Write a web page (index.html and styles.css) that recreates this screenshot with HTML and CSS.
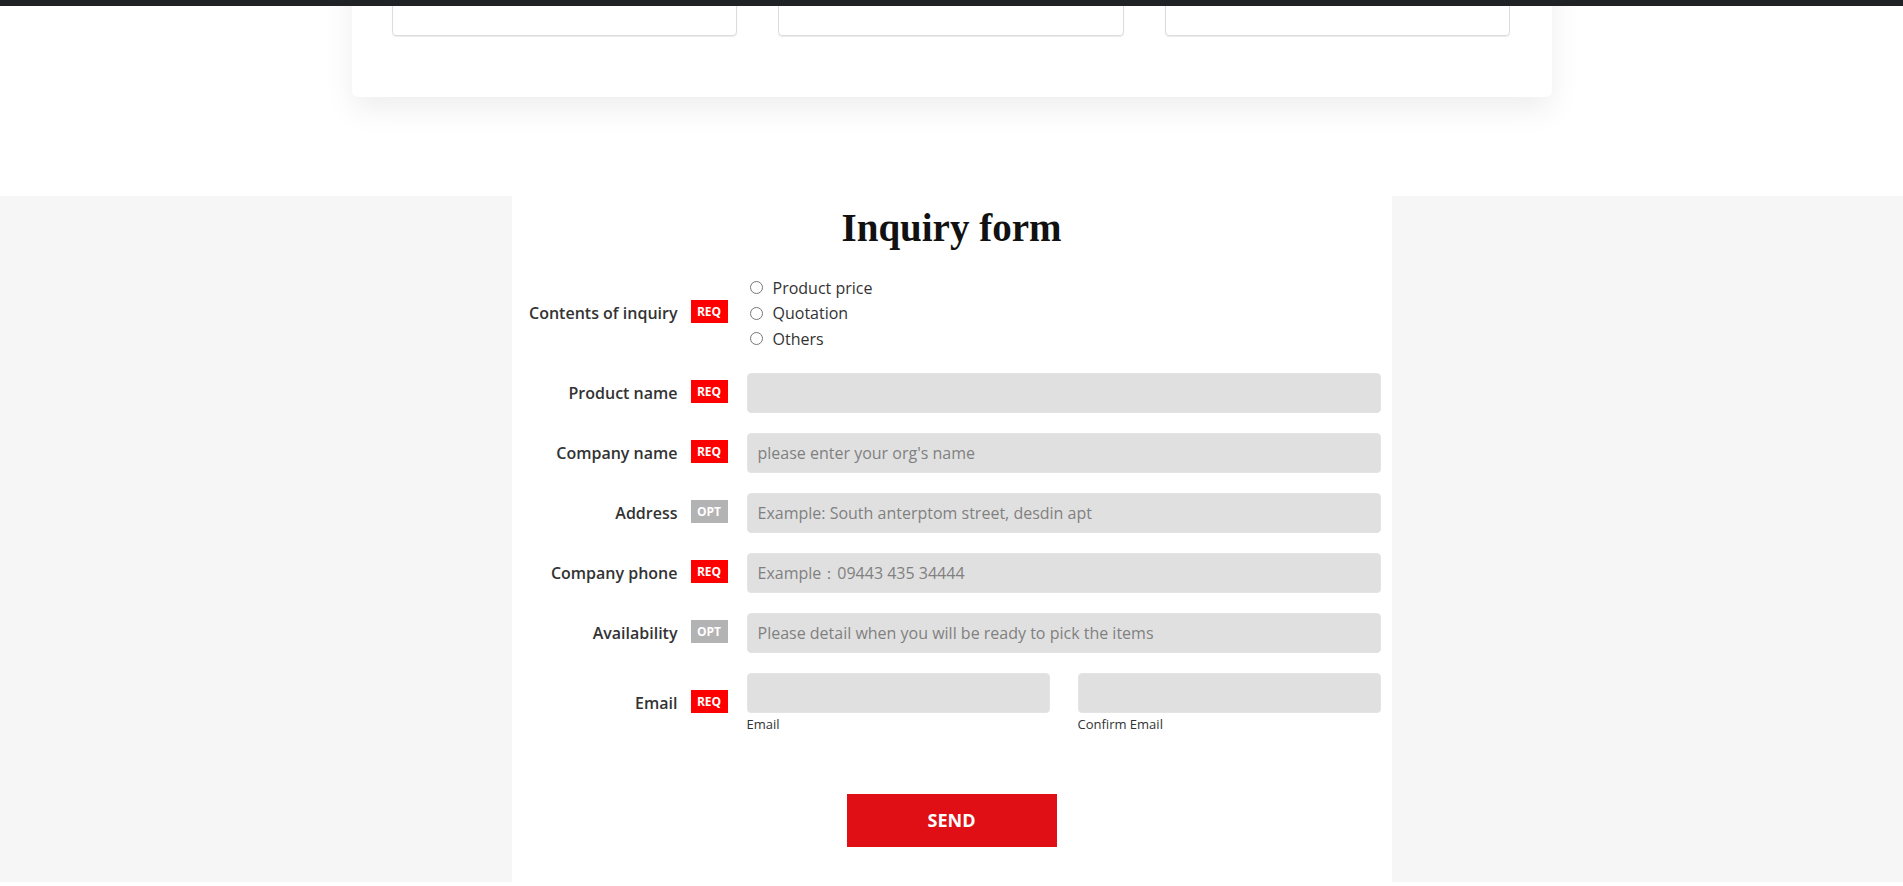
FILE: index.html
```html
<!DOCTYPE html>
<html lang="en">
<head>
<meta charset="utf-8">
<title>Inquiry form</title>
<link rel="stylesheet" href="styles.css">
</head>
<body>
<header class="topbar"></header>

<section class="top-section">
  <div class="card">
    <div class="feature-grid">
      <div class="feature-box"></div>
      <div class="feature-box"></div>
      <div class="feature-box"></div>
    </div>
  </div>
</section>

<section class="inquiry">
  <div class="inquiry-inner">
    <h2 class="inquiry-title">Inquiry form</h2>
    <form class="form">
      <div class="form-row form-row-choice">
        <div class="form-label"><span class="label-text">Contents of inquiry</span><span class="badge badge-req">REQ</span></div>
        <div class="form-field radio-group">
          <label class="radio-option"><input type="radio" name="contents"><span>Product price</span></label>
          <label class="radio-option"><input type="radio" name="contents"><span>Quotation</span></label>
          <label class="radio-option"><input type="radio" name="contents"><span>Others</span></label>
        </div>
      </div>
      <div class="form-row">
        <div class="form-label"><span class="label-text">Product name</span><span class="badge badge-req">REQ</span></div>
        <div class="form-field"><input class="text-input" type="text"></div>
      </div>
      <div class="form-row">
        <div class="form-label"><span class="label-text">Company name</span><span class="badge badge-req">REQ</span></div>
        <div class="form-field"><input class="text-input" type="text" placeholder="please enter your org's name"></div>
      </div>
      <div class="form-row">
        <div class="form-label"><span class="label-text">Address</span><span class="badge badge-opt">OPT</span></div>
        <div class="form-field"><input class="text-input" type="text" placeholder="Example: South anterptom street, desdin apt"></div>
      </div>
      <div class="form-row">
        <div class="form-label"><span class="label-text">Company phone</span><span class="badge badge-req">REQ</span></div>
        <div class="form-field"><input class="text-input" type="text" placeholder="Example：09443 435 34444"></div>
      </div>
      <div class="form-row">
        <div class="form-label"><span class="label-text">Availability</span><span class="badge badge-opt">OPT</span></div>
        <div class="form-field"><input class="text-input" type="text" placeholder="Please detail when you will be ready to pick the items"></div>
      </div>
      <div class="form-row">
        <div class="form-label"><span class="label-text">Email</span><span class="badge badge-req">REQ</span></div>
        <div class="form-field email-pair">
          <div class="email-col"><input class="text-input" type="email"><span class="sub-label">Email</span></div>
          <div class="email-col"><input class="text-input" type="email"><span class="sub-label">Confirm Email</span></div>
        </div>
      </div>
      <div class="form-actions">
        <button class="send-btn" type="button">SEND</button>
      </div>
    </form>
  </div>
</section>
</body>
</html>
```

FILE: styles.css
```css
* { box-sizing: border-box; }

html, body {
  margin: 0;
  padding: 0;
  background: #ffffff;
  font-family: "Open Sans", "Noto Sans", sans-serif;
  color: #333333;
}

.topbar {
  position: fixed;
  top: 0;
  left: 0;
  right: 0;
  height: 6px;
  background: #1f2326;
  z-index: 10;
}

.top-section {
  padding-bottom: 99px;
}

.card {
  width: 1200px;
  margin: -60px auto 0;
  padding: 0 41px 61px 40px;
  background: #ffffff;
  border-radius: 6px;
  box-shadow: 0 12px 30px rgba(0, 0, 0, 0.07);
}

.feature-grid {
  display: grid;
  grid-template-columns: repeat(3, 1fr);
  column-gap: 41px;
}

.feature-box {
  height: 96px;
  border: 1px solid #dcdcdc;
  border-radius: 4px;
  box-shadow: 0 1px 1px rgba(0, 0, 0, 0.08);
}

.inquiry {
  background: #f6f6f6;
}

.inquiry-inner {
  width: 880px;
  margin: 0 auto;
  background: #ffffff;
  padding: 9px 0 35px;
}

.inquiry-title {
  margin: 0;
  text-align: center;
  font-family: "Liberation Serif", "Times New Roman", serif;
  font-weight: 700;
  font-size: 39px;
  line-height: 45px;
  color: #111111;
}

.form {
  margin-top: 25px;
}

.form-row {
  display: grid;
  grid-template-columns: 216px 634px;
  column-gap: 19px;
  align-items: center;
  margin-bottom: 20px;
}

.form-row-choice {
  margin-bottom: 21px;
}

.form-label {
  display: flex;
  justify-content: flex-end;
  align-items: center;
  gap: 13px;
}

.label-text {
  font-size: 16px;
  font-weight: 600;
  color: #333333;
  line-height: 22px;
}

.badge {
  display: inline-flex;
  align-items: center;
  justify-content: center;
  width: 37px;
  height: 23px;
  font-size: 12px;
  font-weight: 700;
  color: #ffffff;
  margin-top: -3px;
}

.badge-req { background: #ff0000; }
.badge-opt { background: #b3b3b3; }

.radio-group {
  display: flex;
  flex-direction: column;
}

.radio-option {
  display: flex;
  align-items: center;
  height: 25.5px;
  font-size: 16px;
  color: #333333;
}

.radio-option input {
  margin: 0 10px 0 3px;
  width: 13px;
  height: 13px;
}

.text-input {
  display: block;
  width: 100%;
  height: 40px;
  padding: 0 10px;
  border: 1px solid #e4e4e4;
  border-radius: 4px;
  background: #e0e0e0;
  font-family: "Open Sans", "Noto Sans", sans-serif;
  font-size: 16px;
  color: #333333;
}

.text-input::placeholder {
  color: #808080;
}

.email-pair {
  display: grid;
  grid-template-columns: 1fr 1fr;
  column-gap: 28px;
}

.sub-label {
  display: block;
  margin-top: 2px;
  font-size: 13px;
  line-height: 18px;
  color: #333333;
}

.form-actions {
  display: flex;
  justify-content: center;
  padding-top: 41px;
}

.send-btn {
  width: 210px;
  height: 53px;
  border: 0;
  background: #e00f16;
  color: #ffffff;
  font-family: "Open Sans", "Noto Sans", sans-serif;
  font-size: 18px;
  font-weight: 700;
  cursor: pointer;
}
```
